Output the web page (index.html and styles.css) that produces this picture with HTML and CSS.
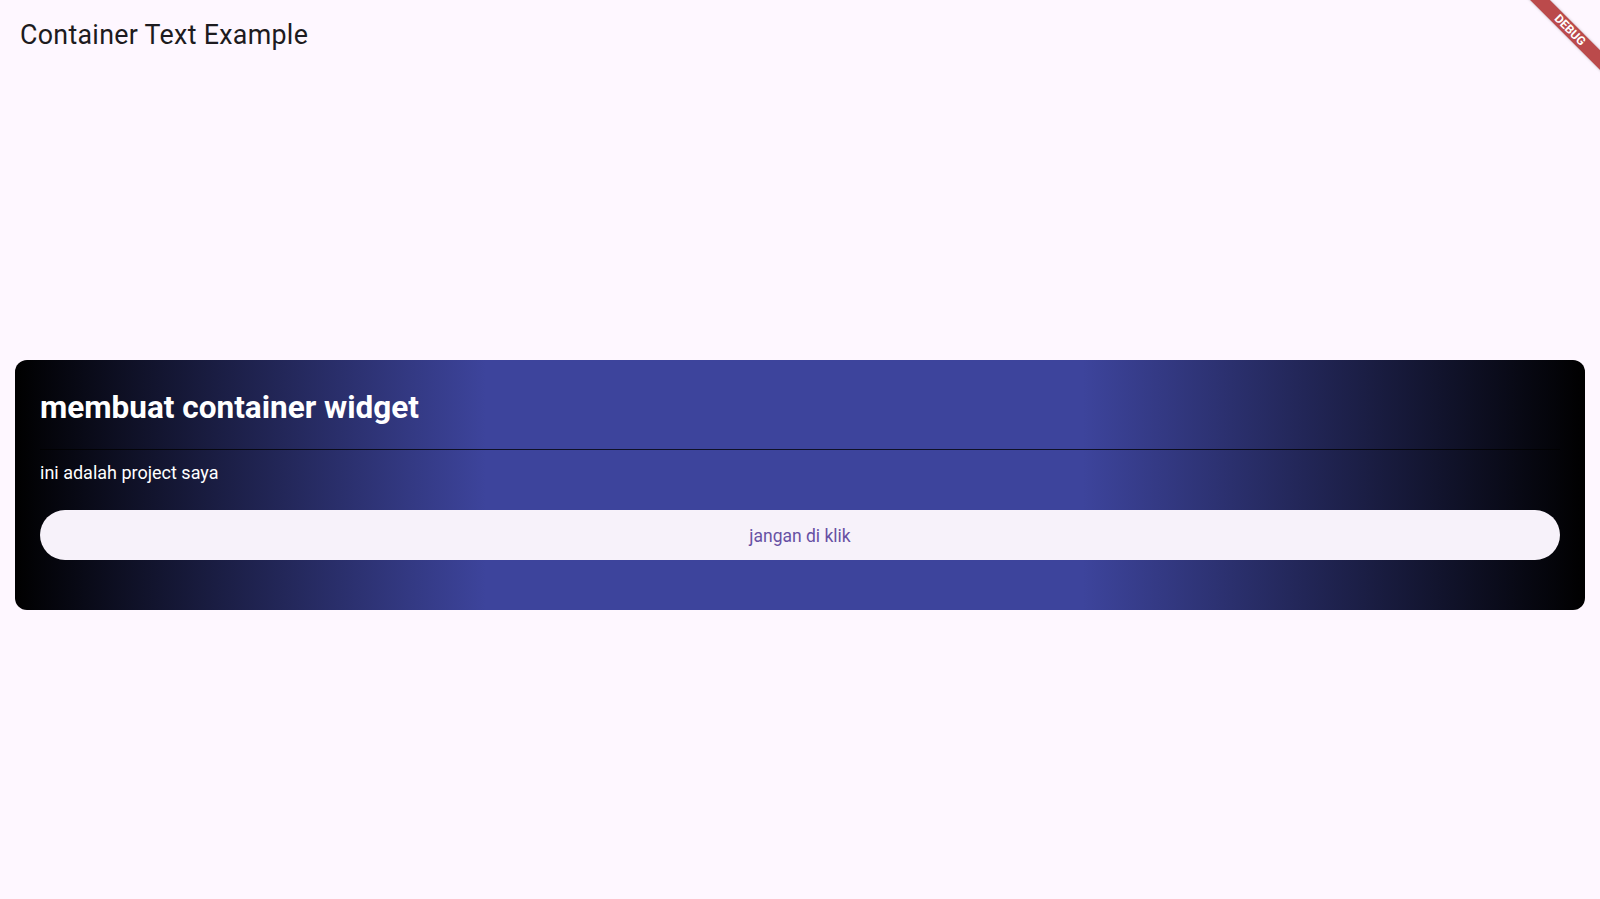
FILE: index.html
```html
<!DOCTYPE html>
<html lang="id">
<head>
<meta charset="utf-8">
<title>Container Text Example</title>
<link rel="stylesheet" href="styles.css">
</head>
<body>
<header class="app-bar">
  <h1 class="app-title">Container Text Example</h1>
</header>
<main class="content">
  <section class="card">
    <h2 class="card-title">membuat container widget</h2>
    <div class="card-divider"></div>
    <p class="card-text">ini adalah project saya</p>
    <button class="card-button" type="button">jangan di klik</button>
  </section>
</main>
<div class="debug-banner">DEBUG</div>
</body>
</html>
```

FILE: styles.css
```css
html, body {
  margin: 0;
  padding: 0;
  width: 1600px;
  height: 899px;
  overflow: hidden;
  background: #fef7ff;
  font-family: Roboto, "Noto Sans", sans-serif;
}

.app-bar {
  height: 70px;
  box-sizing: border-box;
  padding: 19px 0 0 20px;
}

.app-title {
  margin: 0;
  font-size: 26.8px;
  letter-spacing: 0.3px;
  font-weight: 400;
  line-height: 32px;
  color: #1d1b20;
}

.content {
  padding: 290px 15px 0 15px;
}

.card {
  box-sizing: border-box;
  height: 250px;
  padding: 29px 25px 0 25px;
  border-radius: 12px;
  background: linear-gradient(90deg, #000000 0%, #3d449c 30%, #3d449c 68%, #000000 100%);
  display: flex;
  flex-direction: column;
}

.card-title {
  margin: 0;
  font-size: 31.5px;
  font-weight: 700;
  line-height: 37px;
  color: #ffffff;
}

.card-divider {
  margin-top: 23px;
  height: 1px;
  background: rgba(0, 0, 0, 0.75);
}

.card-text {
  margin: 12px 0 0 0;
  font-size: 18px;
  line-height: 21px;
  color: #ffffff;
}

.card-button {
  margin-top: 27px;
  height: 50px;
  padding: 2px 0 0 0;
  border: none;
  border-radius: 25px;
  background: #f7f2fa;
  color: #6750a4;
  font-family: Roboto, "Noto Sans", sans-serif;
  font-size: 17.5px;
  font-weight: 400;
  cursor: pointer;
}

.debug-banner {
  position: absolute;
  left: 1508px;
  top: 23px;
  width: 124px;
  height: 14px;
  transform: rotate(45deg);
  background: rgba(170, 30, 30, 0.8);
  color: #ffffff;
  font-family: Roboto, "Liberation Sans", sans-serif;
  font-size: 12px;
  font-weight: 700;
  line-height: 14px;
  text-align: center;
  box-shadow: 0 0 3px rgba(0, 0, 0, 0.25);
}
```
